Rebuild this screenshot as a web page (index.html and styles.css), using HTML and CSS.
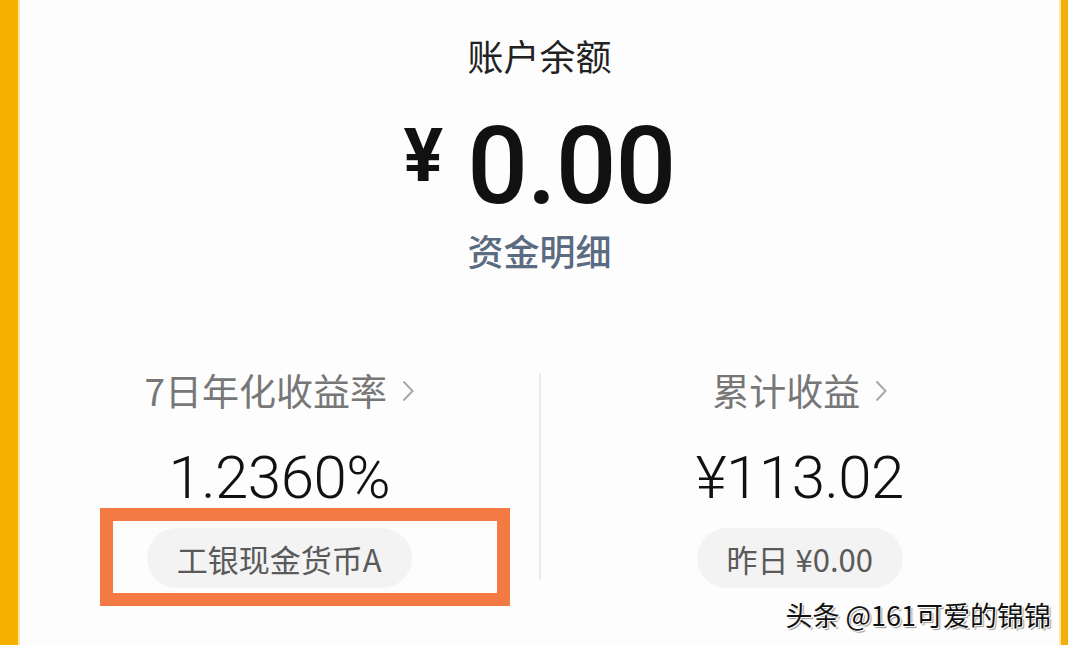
FILE: index.html
```html
<!DOCTYPE html>
<html lang="zh-CN">
<head>
<meta charset="utf-8">
<title>账户余额</title>
<link rel="stylesheet" href="styles.css">
</head>
<body>
<div class="frame">
  <div class="bar bar-left"></div>
  <main class="content">
    <section class="balance">
      <h1 class="title">账户余额</h1>
      <div class="amount"><span class="yen">¥</span><span class="num">0.00</span></div>
      <a class="detail">资金明细</a>
    </section>
    <section class="stats">
      <div class="col">
        <div class="label">7日年化收益率<svg class="chev" viewBox="0 0 12 22" width="12" height="22"><path d="M1.5 1.5 L10.5 11 L1.5 20.5" fill="none" stroke="#a8a8a8" stroke-width="2"/></svg></div>
        <div class="value">1.2360%</div>
        <div class="chip-wrap">
          <div class="chip">工银现金货币A</div>
          <div class="mark"></div>
        </div>
      </div>
      <div class="divider"></div>
      <div class="col">
        <div class="label">累计收益<svg class="chev" viewBox="0 0 12 22" width="12" height="22"><path d="M1.5 1.5 L10.5 11 L1.5 20.5" fill="none" stroke="#a8a8a8" stroke-width="2"/></svg></div>
        <div class="value">¥113.02</div>
        <div class="chip-wrap">
          <div class="chip">昨日 ¥0.00</div>
        </div>
      </div>
    </section>
    <div class="watermark">头条 @161可爱的锦锦</div>
  </main>
  <div class="bar bar-right"></div>
</div>
</body>
</html>
```

FILE: styles.css
```css
* { box-sizing: border-box; }
html, body { margin: 0; padding: 0; }
body {
  width: 1068px;
  height: 645px;
  overflow: hidden;
  background: #fdfdfd;
  font-family: "Noto Sans CJK SC", "Noto Sans", sans-serif;
}
.frame {
  display: flex;
  height: 645px;
}
.bar-left {
  width: 20px;
  background: #f5b000;
  border-right: 2px solid #fbe7a6;
}
.bar-right {
  width: 9px;
  background: #f3ae0c;
  border-left: 2px solid #fbe7a6;
}
.content {
  flex: 1;
  position: relative;
  display: flex;
  flex-direction: column;
  background: #fdfdfd;
}
.balance {
  display: flex;
  flex-direction: column;
  align-items: center;
}
.title {
  margin: 35px 0 0;
  font-size: 36px;
  line-height: 40px;
  font-weight: 400;
  color: #222;
}
.amount {
  margin-top: 31px;
  height: 100px;
  line-height: 100px;
  color: #111;
  font-family: Roboto, "Noto Sans", sans-serif;
  white-space: nowrap;
}
.yen {
  display: inline-block;
  font-size: 74px;
  font-weight: 700;
  vertical-align: 22px;
  margin-right: 24px;
}
.num {
  font-size: 107px;
  font-weight: 500;
  letter-spacing: -1px;
}
.detail {
  margin-top: 24px;
  font-size: 36px;
  line-height: 40px;
  font-weight: 500;
  color: #5a6b82;
}
.stats {
  margin-top: 100px;
  display: flex;
}
.col {
  flex: 1;
  display: flex;
  flex-direction: column;
  align-items: center;
}
.divider {
  width: 2px;
  height: 207px;
  margin-top: 3px;
  background: #ececec;
}
.label {
  font-size: 37px;
  line-height: 40px;
  color: #777;
  display: flex;
  align-items: center;
}
.chev {
  display: block;
  margin-left: 15px;
  margin-top: 2px;
}
.value {
  margin-top: 33px;
  font-family: Roboto, "Noto Sans", sans-serif;
  font-size: 60px;
  font-weight: 300;
  line-height: 70px;
  color: #111;
  letter-spacing: -0.5px;
}
.chip-wrap {
  margin-top: 15px;
  position: relative;
}
.chip {
  height: 60px;
  padding: 0 30px;
  border-radius: 30px;
  background: #f3f3f3;
  display: flex;
  align-items: center;
  font-size: 31px;
  color: #5a5a5a;
  white-space: nowrap;
}
.mark {
  position: absolute;
  left: -47px;
  top: -20px;
  width: 410px;
  height: 98px;
  border: 13px solid #f47a43;
}
.watermark {
  position: absolute;
  right: 8px;
  bottom: 14px;
  font-size: 27px;
  line-height: 32px;
  color: #111;
  text-shadow: 1px 1px 0 #fff, -1px -1px 0 #fff, 2px 2px 1px #999;
  white-space: nowrap;
}
```
